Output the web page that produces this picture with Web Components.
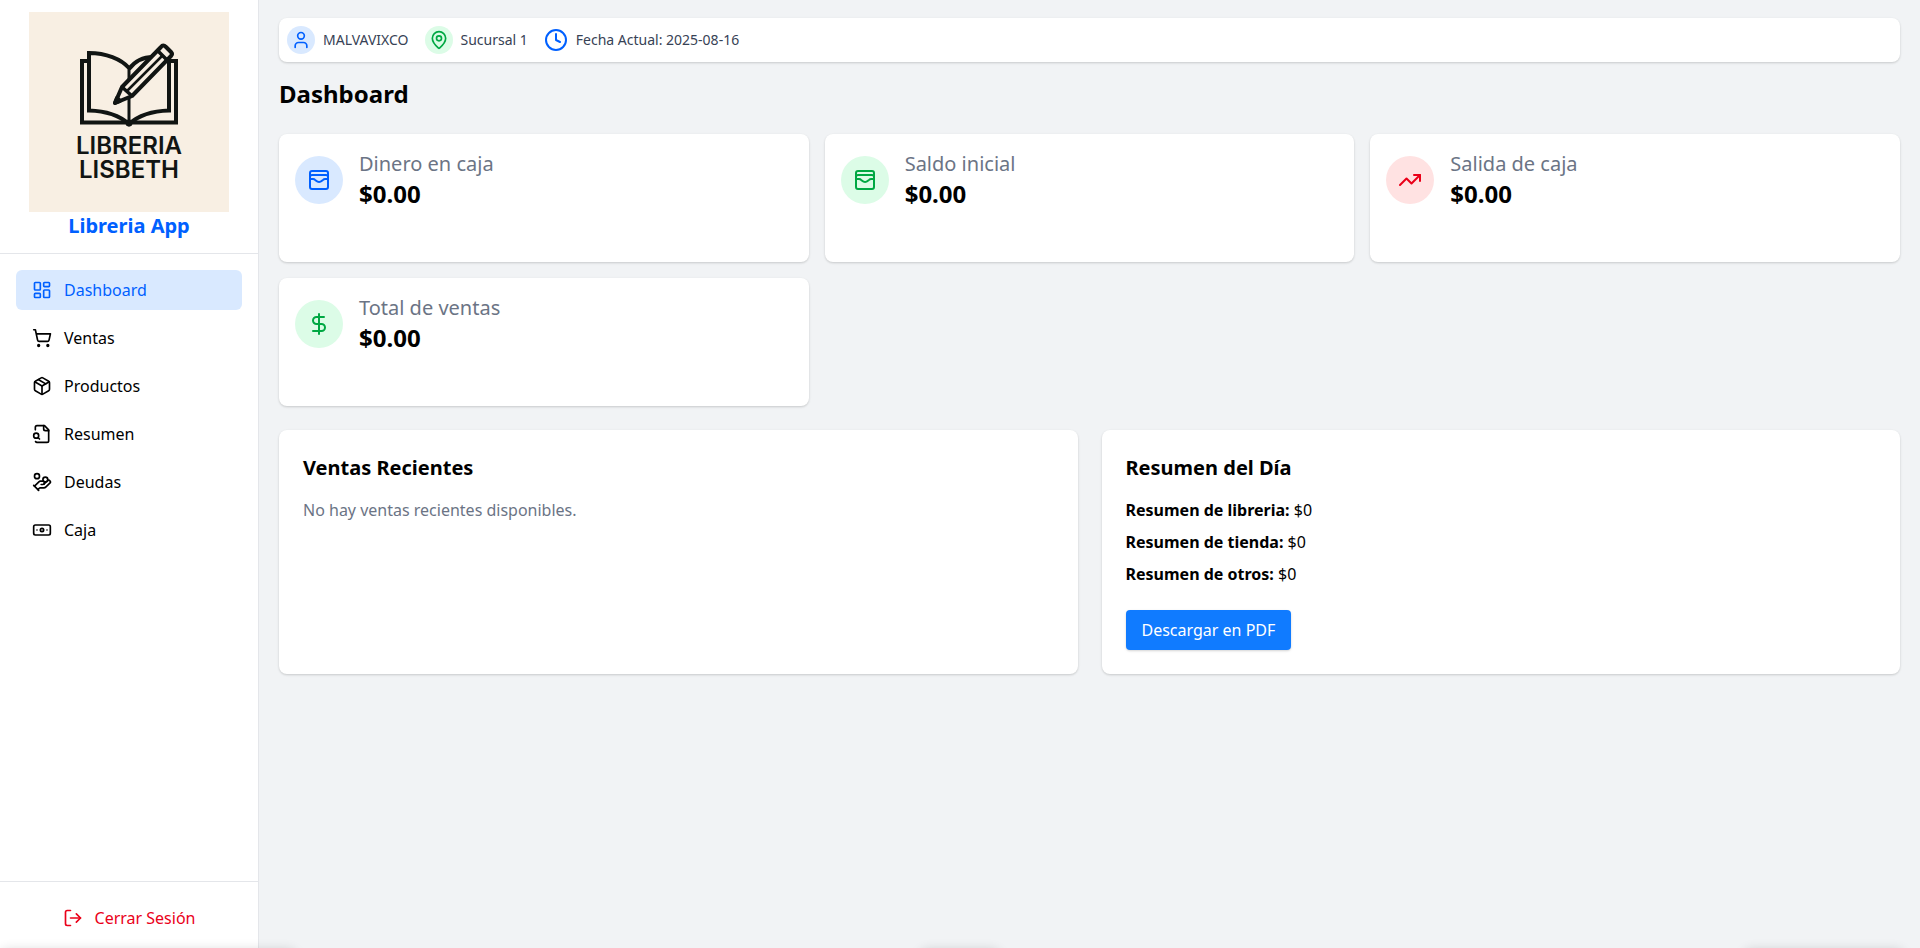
<!DOCTYPE html>
<html lang="es">
<head>
<meta charset="utf-8">
<meta name="viewport" content="width=device-width, initial-scale=1">
<title>Libreria App</title>
<style>
  :root {
    --blue: #0060ff; --blue-soft: #d9e9ff;
    --green: #00a843; --green-soft: #dcfce7;
    --red: #ea0019; --red-soft: #ffe2e2;
    --muted: #6b7485; --slate: #374255; --line: #e4e6ea;
    --shadow: 0 1px 3px rgb(0 0 0 / .1), 0 1px 2px rgb(0 0 0 / .08);
  }
  body { margin: 0; font: 16px/24px "Noto Sans", sans-serif; color: #000; background: #f1f3f5; }
</style>
</head>
<body>
<libreria-app></libreria-app>
<script>
const ICONS = {
  dashboard: '<rect width="7" height="9" x="3" y="3" rx="1"/><rect width="7" height="5" x="14" y="3" rx="1"/><rect width="7" height="9" x="14" y="12" rx="1"/><rect width="7" height="5" x="3" y="16" rx="1"/>',
  cart: '<circle cx="8" cy="21" r="1"/><circle cx="19" cy="21" r="1"/><path d="M2.05 2.05h2l2.66 12.42a2 2 0 0 0 2 1.58h9.78a2 2 0 0 0 1.95-1.57l1.65-7.43H5.12"/>',
  package: '<path d="M11 21.73a2 2 0 0 0 2 0l7-4A2 2 0 0 0 21 16V8a2 2 0 0 0-1-1.73l-7-4a2 2 0 0 0-2 0l-7 4A2 2 0 0 0 3 8v8a2 2 0 0 0 1 1.73z"/><path d="M12 22V12"/><path d="M3.29 7 12 12l8.71-5"/><path d="m7.5 4.27 9 5.15"/>',
  fileSearch: '<path d="M14 2v4a2 2 0 0 0 2 2h4"/><path d="M4.268 21a2 2 0 0 0 1.727 1H18a2 2 0 0 0 2-2V7l-5-5H6a2 2 0 0 0-2 2v3"/><path d="m9 18-1.5-1.5"/><circle cx="5" cy="14" r="3"/>',
  handCoins: '<path d="M11 15h2a2 2 0 1 0 0-4h-3c-.6 0-1.1.2-1.4.6L3 17"/><path d="m7 21 1.6-1.4c.3-.4.8-.6 1.4-.6h4c1.1 0 2.1-.4 2.8-1.2l4.6-4.4a2 2 0 0 0-2.75-2.91l-4.2 3.9"/><path d="m2 16 6 6"/><circle cx="16" cy="9" r="2.9"/><circle cx="6" cy="5" r="3"/>',
  banknote: '<rect width="20" height="12" x="2" y="6" rx="2"/><circle cx="12" cy="12" r="2"/><path d="M6 12h.01M18 12h.01"/>',
  logout: '<path d="M9 21H5a2 2 0 0 1-2-2V5a2 2 0 0 1 2-2h4"/><path d="m16 17 5-5-5-5"/><path d="M21 12H9"/>',
  user: '<path d="M19 21v-2a4 4 0 0 0-4-4H9a4 4 0 0 0-4 4v2"/><circle cx="12" cy="7" r="4"/>',
  pin: '<path d="M20 10c0 4.993-5.539 10.193-7.399 11.799a1 1 0 0 1-1.202 0C9.539 20.193 4 14.993 4 10a8 8 0 0 1 16 0"/><circle cx="12" cy="10" r="3"/>',
  clock: '<circle cx="12" cy="12" r="10"/><path d="M12 6v6l4 2"/>',
  wallet: '<rect width="18" height="18" x="3" y="3" rx="2"/><path d="M3 9a2 2 0 0 1 2-2h14a2 2 0 0 1 2 2"/><path d="M3 11h3c.8 0 1.6.3 2.1.9l1.1.9c1.6 1.6 4.1 1.6 5.7 0l1.1-.9c.5-.5 1.3-.9 2.1-.9H21"/>',
  trend: '<path d="M16 7h6v6"/><path d="m22 7-8.5 8.5-5-5L2 17"/>',
  dollar: '<path d="M12 2v20"/><path d="M17 5H9.5a3.5 3.5 0 0 0 0 7h5a3.5 3.5 0 0 1 0 7H6"/>'
};

function define(name, render) {
  customElements.define(name, class extends HTMLElement {
    connectedCallback() {
      if (this.shadowRoot) return;
      this.attachShadow({ mode: 'open' }).innerHTML = render(this);
    }
  });
}

define('app-icon', el => `
  <style>
    :host { display: block; flex: none; width: var(--icon-size, 24px); height: var(--icon-size, 24px); }
    svg { display: block; width: 100%; height: 100%; }
  </style>
  <svg viewBox="0 0 24 24" fill="none" stroke="currentColor" stroke-width="2" stroke-linecap="round" stroke-linejoin="round" aria-hidden="true">${ICONS[el.getAttribute('name')]}</svg>`);

define('icon-badge', el => `
  <style>
    :host { display: block; flex: none; border-radius: 50%; padding: var(--badge-pad, 12px); }
    :host([tone="blue"]) { color: var(--blue); background: var(--blue-soft); }
    :host([tone="green"]) { color: var(--green); background: var(--green-soft); }
    :host([tone="red"]) { color: var(--red); background: var(--red-soft); }
  </style>
  <app-icon name="${el.getAttribute('icon')}"></app-icon>`);

define('brand-logo', () => `
  <style>
    :host { display: block; width: 200px; height: 200px; background: #f8efe3; }
    svg { display: block; width: 100%; height: 100%; }
    text { font: 600 24px Inter, sans-serif; text-anchor: middle; fill: #111513; }
  </style>
  <svg viewBox="0 0 200 200" role="img" aria-label="Libreria Lisbeth">
    <g fill="none" stroke="#111513" stroke-width="4">
      <path d="M60 49H53V110.500H97M141 49H147V110.500H103"/>
      <path d="M100 56C92 47 77 41 60 41V98.500C77 99 90 103 100 112C110 103 123 99 140 98.500V47"/>
      <path d="M100 56V112" stroke-width="3"/>
      <path d="M100 57C106 49 114 45 124 45"/>
      <g stroke-linejoin="round">
        <path d="M93 75L132 35Q134 32 137 35L142 40Q144 42 142 44L103 84L86 91Z" fill="#f8efe3"/>
        <path d="M128 38L138 48M93 75L103 84" stroke-width="3.500"/>
        <path d="M98 79L133 44" stroke-width="2.500"/>
        <path d="M88 86L86 91L91 89Z" fill="#111513"/>
      </g>
    </g>
    <circle cx="100" cy="111" r="3.500" fill="#111513"/>
    <text><tspan x="100" y="142">LIBRERIA</tspan><tspan x="100" y="166">LISBETH</tspan></text>
  </svg>`);

define('nav-item', el => `
  <style>
    :host { display: block; }
    a { display: flex; align-items: center; gap: 12px; padding: 8px 16px; border-radius: 6px; color: inherit; text-decoration: none; --icon-size: 20px; }
    :host([active]) a { color: var(--blue); background: var(--blue-soft); }
  </style>
  <a href="#" ${el.hasAttribute('active') ? 'aria-current="page"' : ''}><app-icon name="${el.getAttribute('icon')}"></app-icon><slot></slot></a>`);

define('side-bar', () => `
  <style>
    :host { display: flex; flex-direction: column; box-sizing: border-box; background: #fff; border-right: 1px solid var(--line); }
    header { display: flex; flex-direction: column; align-items: center; padding: 12px 16px 13px; border-bottom: 1px solid var(--line); }
    strong { font-size: 20px; line-height: 28px; color: var(--blue); }
    nav { flex: 1; display: flex; flex-direction: column; gap: 8px; padding: 16px; }
    footer { display: flex; justify-content: center; border-top: 1px solid var(--line); padding: 16px 16px 10px; }
    button { display: flex; align-items: center; gap: 12px; padding: 8px 16px; border: 0; background: none; color: var(--red); font: inherit; cursor: pointer; --icon-size: 20px; }
  </style>
  <header><brand-logo></brand-logo><strong>Libreria App</strong></header>
  <nav>
    <nav-item icon="dashboard" active>Dashboard</nav-item>
    <nav-item icon="cart">Ventas</nav-item>
    <nav-item icon="package">Productos</nav-item>
    <nav-item icon="fileSearch">Resumen</nav-item>
    <nav-item icon="handCoins">Deudas</nav-item>
    <nav-item icon="banknote">Caja</nav-item>
  </nav>
  <footer><button type="button"><app-icon name="logout"></app-icon>Cerrar Sesión</button></footer>`);

define('info-bar', () => `
  <style>
    :host { display: flex; align-items: center; gap: 16px; padding: 8px; background: #fff; border-radius: 8px; box-shadow: var(--shadow); font-size: 14px; line-height: 20px; color: var(--slate); }
    div { display: flex; align-items: center; gap: 8px; }
    icon-badge { --icon-size: 20px; --badge-pad: 4px; }
    div > app-icon { color: var(--blue); }
  </style>
  <div><icon-badge tone="blue" icon="user"></icon-badge><span>MALVAVIXCO</span></div>
  <div><icon-badge tone="green" icon="pin"></icon-badge><span>Sucursal 1</span></div>
  <div><app-icon name="clock"></app-icon><span>Fecha Actual: 2025-08-16</span></div>`);

define('stat-card', el => `
  <style>
    :host { display: flex; align-items: flex-start; box-sizing: border-box; min-height: 128px; padding: 16px; background: #fff; border-radius: 8px; box-shadow: var(--shadow); }
    div { display: flex; align-items: center; gap: 16px; }
    p { margin: 0; }
    .label { font-size: 20px; line-height: 28px; color: var(--muted); }
    .value { font-size: 24px; line-height: 32px; font-weight: 700; }
  </style>
  <div>
    <icon-badge tone="${el.getAttribute('tone')}" icon="${el.getAttribute('icon')}"></icon-badge>
    <section><p class="label">${el.getAttribute('label')}</p><p class="value"><slot></slot></p></section>
  </div>`);

define('content-panel', el => `
  <style>
    :host { display: block; padding: 24px; background: #fff; border-radius: 8px; box-shadow: var(--shadow); }
    h2 { margin: 0 0 16px; font-size: 20px; line-height: 28px; font-weight: 700; }
  </style>
  <h2>${el.getAttribute('heading')}</h2><slot></slot>`);

define('day-summary', () => `
  <style>
    :host { display: flex; flex-direction: column; align-items: flex-start; gap: 24px; }
    ul { display: flex; flex-direction: column; gap: 8px; margin: 0; padding: 0; list-style: none; }
    strong { font-weight: 700; }
    button { padding: 8px 16px; border: 0; border-radius: 4px; background: #107bff; color: #fff; font: inherit; cursor: pointer; box-shadow: var(--shadow); }
  </style>
  <ul>
    <li><strong>Resumen de libreria:</strong> $0</li>
    <li><strong>Resumen de tienda:</strong> $0</li>
    <li><strong>Resumen de otros:</strong> $0</li>
  </ul>
  <button type="button">Descargar en PDF</button>`);

define('dashboard-page', () => `
  <style>
    :host { display: block; box-sizing: border-box; padding: 18px 20px; }
    h1 { margin: 16px 0 24px; font-size: 24px; line-height: 32px; font-weight: 700; }
    .stats { display: grid; grid-template-columns: repeat(3, 1fr); gap: 16px; margin-bottom: 24px; }
    .panels { display: grid; grid-template-columns: 1fr 1fr; gap: 24px; }
    p { margin: 0; color: var(--muted); }
  </style>
  <info-bar></info-bar>
  <h1>Dashboard</h1>
  <div class="stats">
    <stat-card tone="blue" icon="wallet" label="Dinero en caja">$0.00</stat-card>
    <stat-card tone="green" icon="wallet" label="Saldo inicial">$0.00</stat-card>
    <stat-card tone="red" icon="trend" label="Salida de caja">$0.00</stat-card>
    <stat-card tone="green" icon="dollar" label="Total de ventas">$0.00</stat-card>
  </div>
  <div class="panels">
    <content-panel heading="Ventas Recientes"><p>No hay ventas recientes disponibles.</p></content-panel>
    <content-panel heading="Resumen del Día"><day-summary></day-summary></content-panel>
  </div>`);

/* Soft shades cast upwards along the bottom edge of the window. */
define('edge-shade', () => `
  <style>
    :host { position: fixed; inset: auto 0 0 0; height: 12px; overflow: hidden; pointer-events: none; }
    i { position: absolute; top: 14px; height: 20px; box-shadow: 0 0 12px rgb(0 0 0 / .16); border-radius: 8px; }
    i:nth-of-type(1) { left: 0; width: 296px; }
    i:nth-of-type(2) { left: 920px; width: 80px; }
    i:nth-of-type(3) { left: 1744px; width: 160px; }
  </style>
  <i></i><i></i><i></i>`);

define('libreria-app', () => `
  <style>
    :host { display: flex; min-height: 100vh; }
    side-bar { flex: none; width: 259px; }
    dashboard-page { flex: 1; min-width: 0; }
  </style>
  <side-bar></side-bar>
  <dashboard-page role="main"></dashboard-page>
  <edge-shade></edge-shade>`);
</script>
</body>
</html>
